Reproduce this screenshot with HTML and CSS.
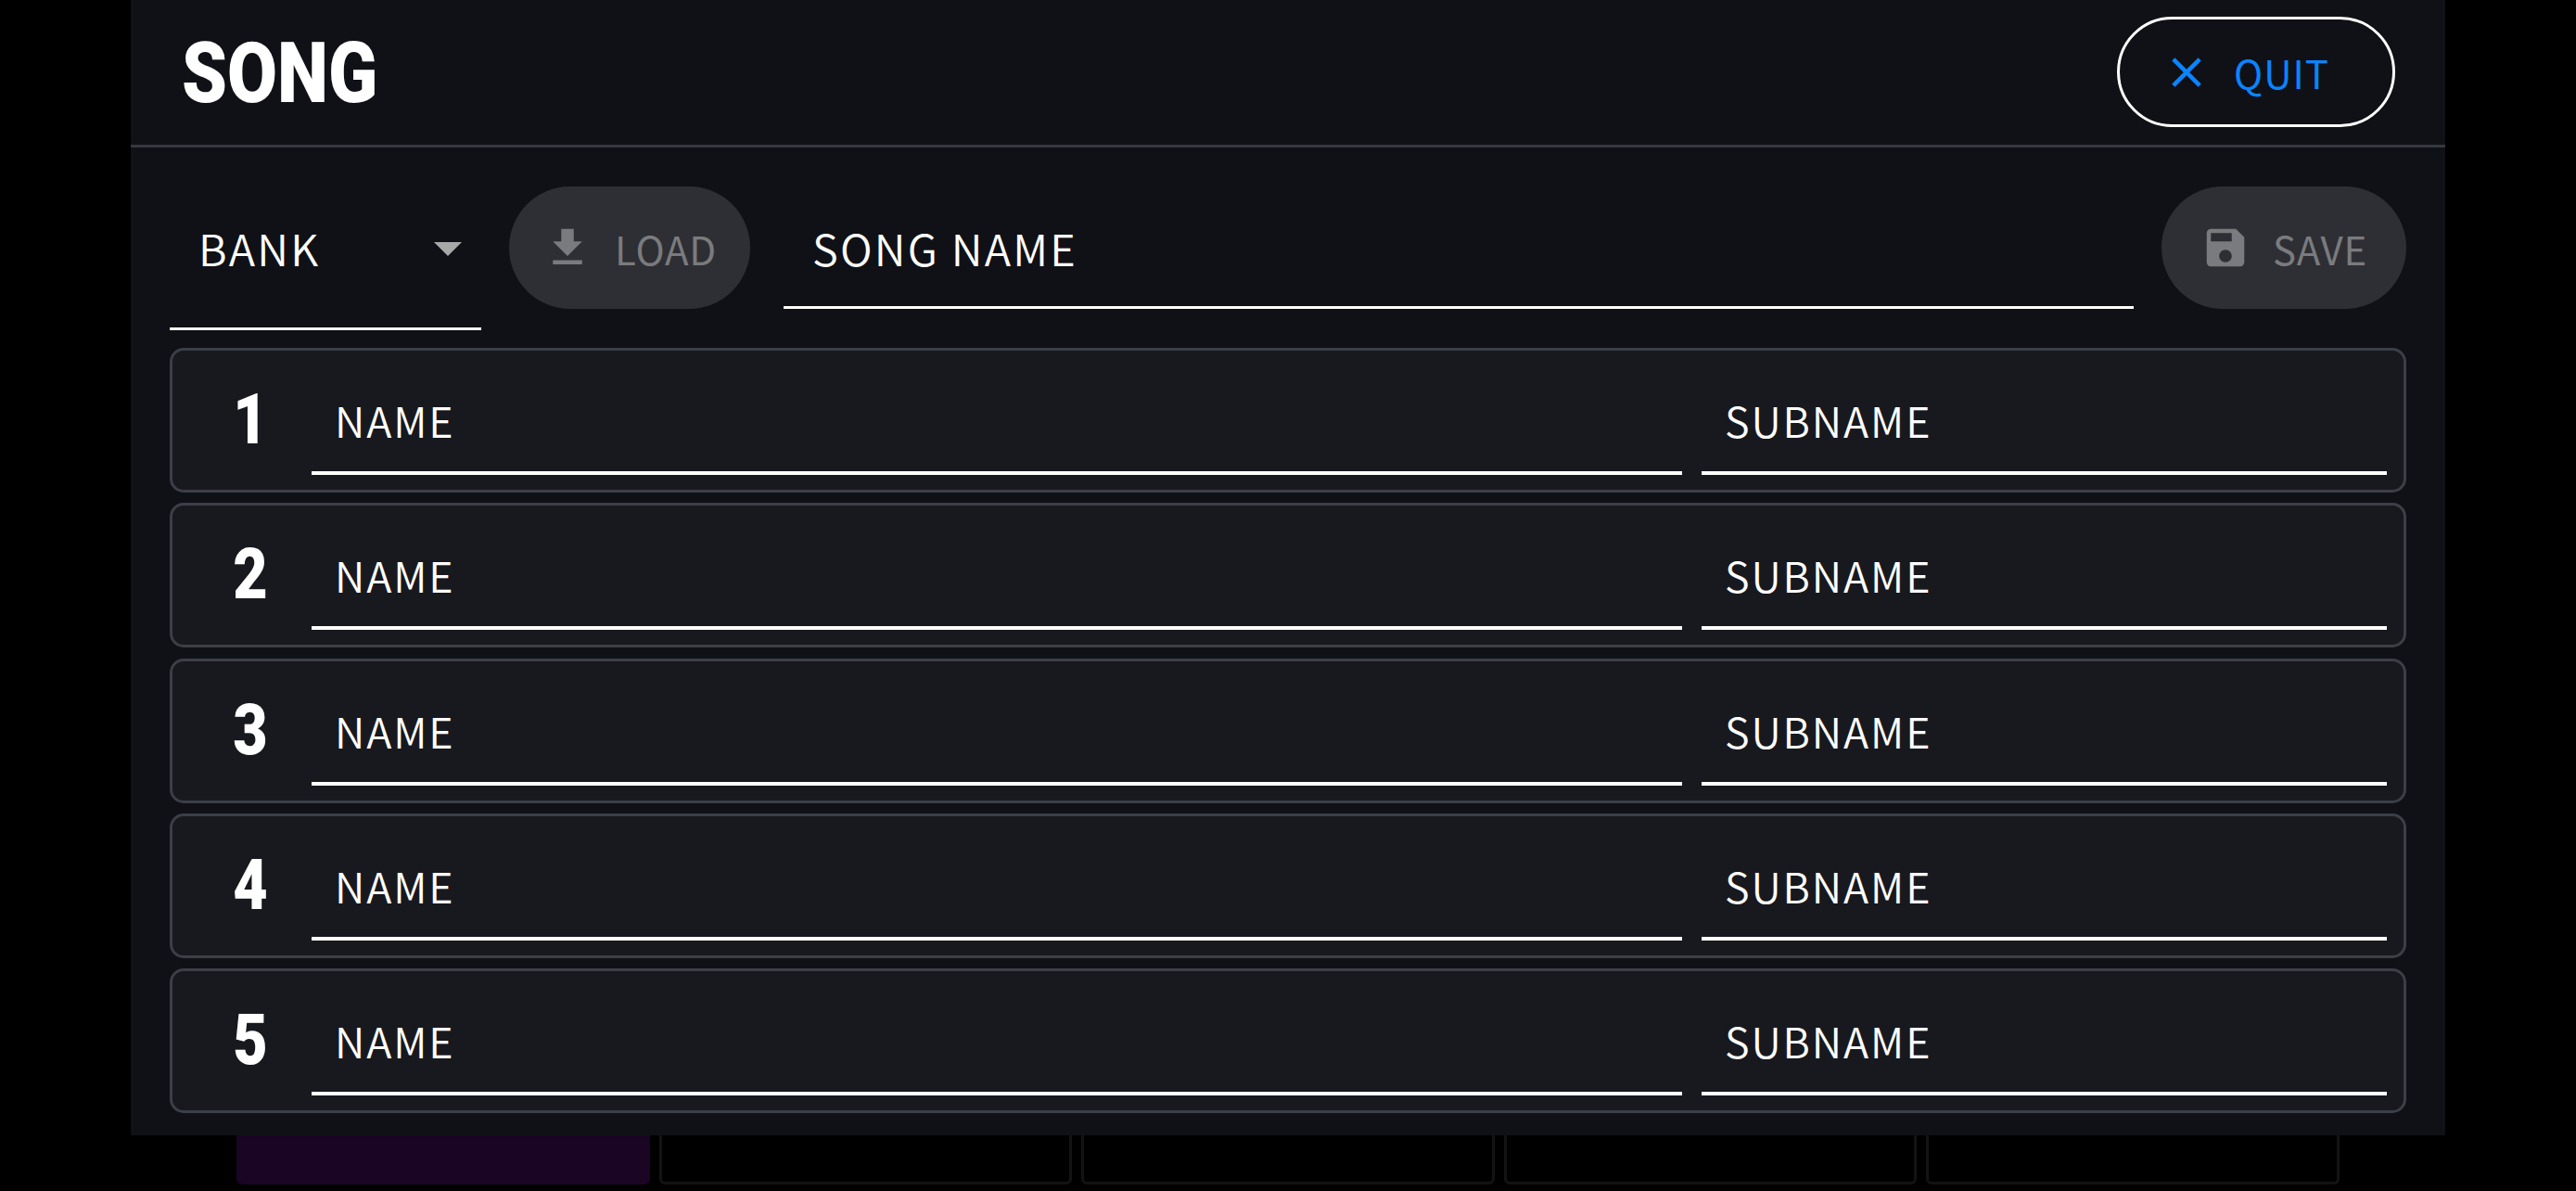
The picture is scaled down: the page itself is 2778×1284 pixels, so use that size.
FILE: index.html
```html
<!DOCTYPE html>
<html lang="en">
<head>
<meta charset="utf-8">
<title>Song</title>
<link rel="stylesheet" href="styles.css">
</head>
<body>
<div class="backdrop">
  <div class="card card-active"></div>
  <div class="card"></div>
  <div class="card"></div>
  <div class="card"></div>
  <div class="card"></div>
</div>
<main class="modal">
  <header class="modal-head">
    <h1 class="title">SONG</h1>
    <button class="quit">
      <svg class="icon" viewBox="0 0 24 24"><path d="M19 6.41L17.59 5 12 10.59 6.41 5 5 6.41 10.59 12 5 17.59 6.41 19 12 13.41 17.59 19 19 17.59 13.41 12z"/></svg>
      <span>QUIT</span>
    </button>
  </header>
  <section class="toolbar">
    <div class="select">
      <span>BANK</span>
      <svg class="caret" viewBox="0 0 30 15"><polygon points="0,0 30,0 15,15"/></svg>
    </div>
    <button class="action load">
      <svg class="icon" viewBox="0 0 24 24"><path d="M19 9h-4V3H9v6H5l7 7 7-7zM5 18v2h14v-2H5z"/></svg>
      <span>LOAD</span>
    </button>
    <div class="song-name">SONG NAME</div>
    <button class="action save">
      <svg class="icon" viewBox="0 0 24 24"><path d="M17 3H5c-1.11 0-2 .9-2 2v14c0 1.1.89 2 2 2h14c1.1 0 2-.9 2-2V7l-4-4zm-5 16c-1.66 0-3-1.34-3-3s1.34-3 3-3 3 1.34 3 3-1.34 3-3 3zm3-10H5V5h10v4z"/></svg>
      <span>SAVE</span>
    </button>
  </section>
  <section class="rows">
    <div class="row"><div class="num"><span class="num-glyph">1</span></div><div class="field field-name">NAME</div><div class="field field-sub">SUBNAME</div></div>
    <div class="row"><div class="num"><span class="num-glyph">2</span></div><div class="field field-name">NAME</div><div class="field field-sub">SUBNAME</div></div>
    <div class="row"><div class="num"><span class="num-glyph">3</span></div><div class="field field-name">NAME</div><div class="field field-sub">SUBNAME</div></div>
    <div class="row"><div class="num"><span class="num-glyph">4</span></div><div class="field field-name">NAME</div><div class="field field-sub">SUBNAME</div></div>
    <div class="row"><div class="num"><span class="num-glyph">5</span></div><div class="field field-name">NAME</div><div class="field field-sub">SUBNAME</div></div>
  </section>
</main>
</body>
</html>
```
FILE: styles.css
```css
* { box-sizing: border-box; }
html, body { margin: 0; height: 100%; }
body {
  width: 2778px;
  height: 1284px;
  background: #000;
  overflow: hidden;
  position: relative;
  font-family: "Noto Sans CJK JP", "Noto Sans", sans-serif;
  color: #fff;
  display: flex;
  flex-direction: column;
  justify-content: flex-end;
}
.backdrop {
  display: flex;
  gap: 10px;
  padding: 0 0 7px 255px;
}
.card {
  width: 445.5px;
  height: 120px;
  border: 3px solid #131313;
  border-radius: 0 0 6px 6px;
}
.card-active { background: #1a0524; border-color: #1a0524; }

.modal {
  position: absolute;
  left: 141px;
  top: 0;
  width: 2496px;
  height: 1224px;
  background: #101116;
}
.modal-head {
  height: 159px;
  border-bottom: 3px solid #35383f;
  display: flex;
  align-items: flex-start;
  justify-content: space-between;
  padding: 18px 54px 0 55px;
}
.title {
  margin: 0;
  display: inline-block;
  font-family: "Roboto", sans-serif;
  font-weight: 900;
  font-size: 91px;
  line-height: 122px;
  color: #fff;
  transform: scaleX(0.86);
  transform-origin: left center;
}
button {
  font-family: inherit;
  margin: 0;
  cursor: pointer;
}
.icon { width: 54px; height: 54px; flex: none; fill: currentColor; }
.quit {
  width: 300px;
  height: 119px;
  border: 3px solid #fff;
  border-radius: 60px;
  background: transparent;
  color: #0a84ff;
  display: flex;
  align-items: center;
  gap: 24px;
  padding: 0 0 0 45px;
  font-size: 42px;
  letter-spacing: 1px;
}
.toolbar {
  display: flex;
  align-items: flex-start;
  padding: 42px 42px 0;
  height: 198px;
}
.select {
  width: 336px;
  height: 155px;
  border-bottom: 3px solid #fff;
  display: flex;
  align-items: flex-start;
  justify-content: space-between;
  padding: 24px 21px 0 31px;
  font-size: 47px;
  font-weight: 350;
  line-height: 84px;
  letter-spacing: 2.2px;
}
.caret { width: 30px; height: 15px; fill: #a8a8a8; margin-top: 36px; }
.action {
  height: 132px;
  border: 0;
  border-radius: 66px;
  background: #2e2f34;
  color: #7a7b7e;
  display: flex;
  align-items: center;
  font-size: 42px;
  letter-spacing: 0.8px;
  padding: 0;
}
.load { width: 260px; margin-left: 30px; padding-left: 36px; gap: 24px; }
.save { width: 264px; margin-left: 30px; padding-left: 42px; gap: 24px; }
.song-name {
  flex: 1;
  height: 132px;
  margin-left: 36px;
  border-bottom: 3px solid #fff;
  padding-left: 31px;
  font-size: 47px;
  font-weight: 350;
  line-height: 132px;
  letter-spacing: 2.2px;
}
.rows {
  display: flex;
  flex-direction: column;
  gap: 11.25px;
  padding: 0 42px;
  margin-top: 18px;
}
.row {
  height: 156px;
  background: #18191e;
  border: 3px solid #3c3f47;
  border-radius: 15px;
  display: flex;
  align-items: flex-start;
  padding: 0 18px 0 0;
}
.num {
  width: 150px;
  padding-left: 18px;
  text-align: center;
  font-family: "Roboto", sans-serif;
  font-weight: 900;
  font-size: 76px;
  line-height: 148px;
}
.num-glyph {
  display: inline-block;
  transform: scaleX(0.85);
}
.field {
  height: 134px;
  padding: 33px 0 0 25px;
  border-bottom: 4px solid #fff;
  font-size: 45px;
  font-weight: 350;
  line-height: 84px;
  letter-spacing: 1.9px;
}
.field-name { flex: 1; }
.field-sub { width: 739px; margin-left: 21px; }
```
